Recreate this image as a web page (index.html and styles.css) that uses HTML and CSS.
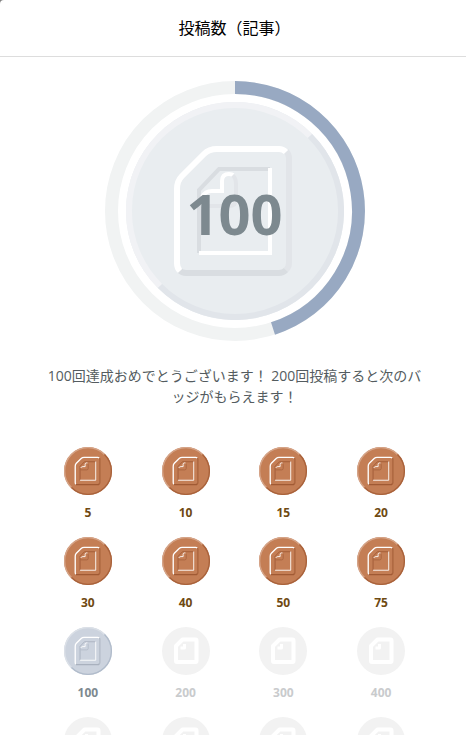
FILE: index.html
```html
<!DOCTYPE html>
<html lang="ja">
<head>
  <meta charset="UTF-8">
  <meta name="viewport" content="width=device-width, initial-scale=1">
  <title>投稿数（記事）</title>
  <link rel="stylesheet" href="styles.css">
</head>
<body>
  <svg class="defs" aria-hidden="true">
    <!-- earned badge -->
    <symbol id="badge" viewBox="0 0 218 218">
      <circle class="face" cx="109" cy="109" r="109"/>
      <path class="rim-light" d="M34 184A106 106 0 0 1 184 34"/>
      <path class="rim-dark" d="M184 34A106 106 0 0 1 34 184"/>
      <path class="doc-shade" d="M160 49Q163 52 163 56V161Q163 165 160 168"/>
      <path class="doc-dark" d="M160 168Q157 171 153 171H60Q56 171 53 168"/>
      <path class="doc-light" d="M54 169Q51 166 51 161V87Q51 79 56 74L78 52Q83 47 91 47H153Q157 47 160 50"/>
      <path class="in-dark" d="M73 151V88L93 67H144"/>
      <path class="in-light" d="M144 66V151H73"/>
      <path class="fold-dark" d="M106 73Q110 75 110 82V97Q110 104 103 104H75"/>
      <path class="fold-light" d="M76 95Q79 89 86 89H96V79Q96 72 103 72Q106 72 107 73"/>
    </symbol>
    <!-- badge not earned yet -->
    <symbol id="badge-off" viewBox="0 0 48 48">
      <circle class="off-face" cx="24" cy="24" r="24"/>
      <path class="off-doc" d="M14 19L20.5 12.5H33.5Q34.5 12.5 34.5 13.5V34Q34.5 35 33.5 35H15Q14 35 14 34Z"/>
      <path class="off-fold" d="M18.5 21H22.5V17"/>
    </symbol>
  </svg>

  <div class="modal">
    <header class="modal-header">
      <h1>投稿数（記事）</h1>
    </header>
    <main class="modal-body">
      <div class="progress">
        <svg class="ring" viewBox="0 0 260 260" aria-hidden="true">
          <circle class="ring-track" cx="130" cy="130" r="123.5"/>
          <path class="ring-value" d="M130 6.5A123.5 123.5 0 0 1 168 247.5"/>
          <use href="#badge" x="21" y="21" width="218" height="218"/>
        </svg>
        <span class="count">100</span>
      </div>
      <p class="message">100回達成おめでとうございます！ 200回投稿すると次のバッジがもらえます！</p>
      <ul class="badges">
        <li class="bronze"><svg><use href="#badge"/></svg><span>5</span></li>
        <li class="bronze"><svg><use href="#badge"/></svg><span>10</span></li>
        <li class="bronze"><svg><use href="#badge"/></svg><span>15</span></li>
        <li class="bronze"><svg><use href="#badge"/></svg><span>20</span></li>
        <li class="bronze"><svg><use href="#badge"/></svg><span>30</span></li>
        <li class="bronze"><svg><use href="#badge"/></svg><span>40</span></li>
        <li class="bronze"><svg><use href="#badge"/></svg><span>50</span></li>
        <li class="bronze"><svg><use href="#badge"/></svg><span>75</span></li>
        <li class="silver"><svg><use href="#badge"/></svg><span>100</span></li>
        <li class="off"><svg><use href="#badge-off"/></svg><span>200</span></li>
        <li class="off"><svg><use href="#badge-off"/></svg><span>300</span></li>
        <li class="off"><svg><use href="#badge-off"/></svg><span>400</span></li>
        <li class="off"><svg><use href="#badge-off"/></svg></li>
        <li class="off"><svg><use href="#badge-off"/></svg></li>
        <li class="off"><svg><use href="#badge-off"/></svg></li>
        <li class="off"><svg><use href="#badge-off"/></svg></li>
      </ul>
    </main>
  </div>
</body>
</html>
```
FILE: styles.css
```css
* {
  box-sizing: border-box;
}
body {
  margin: 0;
  height: 100vh;
  overflow: hidden;
  background: #808080;
  font-family: "Open Sans", "Noto Sans CJK JP", sans-serif;
  color: #08131a;
}
.defs {
  position: absolute;
  width: 0;
  height: 0;
}
.modal {
  min-height: 100vh;
  background: #fff;
  border-top-left-radius: 4px;
}
.modal-header {
  padding: 15px 0 17px 3px;
  border-bottom: 1px solid #ddd;
  text-align: center;
}
.modal-header h1 {
  margin: 0;
  font-size: 16px;
  line-height: 24px;
  font-weight: 400;
  font-family: "Noto Sans CJK JP", sans-serif;
  color: #000;
}
.modal-body {
  padding: 24px 36px 0 39px;
}

/* progress ring */
.progress {
  display: grid;
  place-items: center;
  --face: #e9edf0;
  --rim-light: #f1f2f5;
  --rim-dark: #e1e5ea;
  --light: #fff;
  --dark: #d9dde1;
  --shade: #e2e5e9;
}
.ring,
.count {
  grid-area: 1 / 1;
}
.ring {
  width: 260px;
  height: 260px;
}
.ring-track,
.ring-value {
  fill: none;
  stroke: #f1f3f3;
  stroke-width: 13;
}
.ring-value {
  stroke: #98a9c2;
}
.count {
  padding-top: 4px;
  font-size: 56px;
  line-height: 64px;
  font-weight: 700;
  color: #7d898f;
}
.message {
  margin: 24px 0 0;
  padding: 0 8px;
  font-size: 14px;
  line-height: 21px;
  text-align: center;
  word-break: break-all;
  line-break: anywhere;
  color: #545c60;
}

/* badge list */
.badges {
  display: grid;
  grid-template-columns: repeat(4, 1fr);
  row-gap: 14px;
  margin: 40px 0 0;
  padding: 0;
  list-style: none;
}
.badges li {
  display: flex;
  flex-direction: column;
  align-items: center;
  gap: 8px;
  font-size: 12px;
  line-height: 20px;
  font-weight: 700;
}
.badges svg {
  width: 48px;
  height: 48px;
}
.bronze {
  color: #6f4a12;
  --face: #c47e55;
  --rim-light: #d5a488;
  --rim-dark: #a9623b;
  --light: #fff;
  --dark: #a05a34;
  --shade: #aa643d;
}
.silver {
  color: #7d898f;
  --face: #ccd3de;
  --rim-light: #dbe0e7;
  --rim-dark: #b1bccb;
  --light: #fff;
  --dark: #a9b1be;
  --shade: #b4bcc8;
}
.off {
  color: #c9cbcd;
}

/* badge parts */
.face {
  fill: var(--face);
}
.rim-light,
.rim-dark,
.doc-light,
.doc-dark,
.doc-shade,
.in-light,
.in-dark,
.fold-light,
.fold-dark {
  fill: none;
  stroke-width: 6;
}
.rim-light {
  stroke: var(--rim-light);
}
.rim-dark {
  stroke: var(--rim-dark);
}
.doc-light,
.in-light,
.fold-light {
  stroke: var(--light);
}
.doc-dark,
.in-dark {
  stroke: var(--dark);
}
.doc-shade,
.fold-dark {
  stroke: var(--shade);
}
.in-light,
.in-dark,
.fold-light,
.fold-dark {
  stroke-width: 4;
}
/* thin lines fade at badge size */
.badges .in-light,
.badges .fold-light {
  stroke-width: 5;
}
.off-face {
  fill: #f2f2f2;
}
.off-doc,
.off-fold {
  fill: none;
  stroke: #fff;
  stroke-width: 4;
  stroke-linejoin: round;
}
.off-fold {
  stroke-width: 3;
}
```
